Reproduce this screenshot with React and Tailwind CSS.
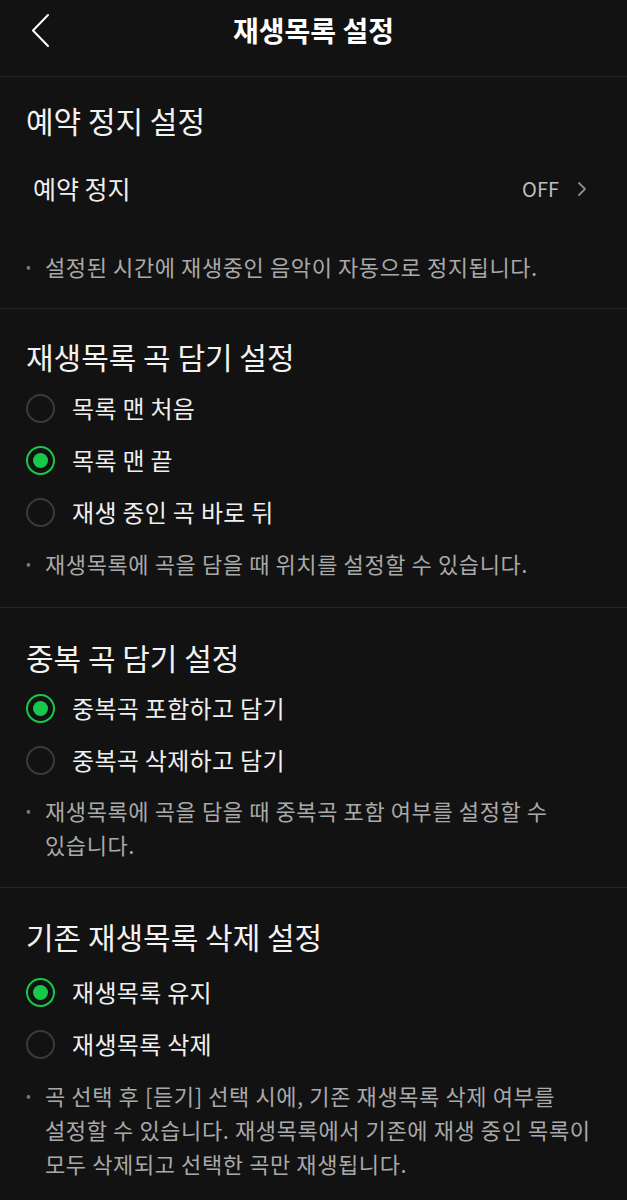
import React, { useState } from 'react';

const FONT = "font-['Noto_Sans_CJK_KR','Noto_Sans',sans-serif]";

function Radio({ checked }) {
  if (checked) {
    return (
      <span className="flex h-[29px] w-[29px] shrink-0 items-center justify-center rounded-full border-2 border-[#17c94a]">
        <span className="h-[15px] w-[15px] rounded-full bg-[#17c94a]" />
      </span>
    );
  }
  return <span className="h-[29px] w-[29px] shrink-0 rounded-full border-2 border-[#3a3a3a]" />;
}

function Note({ children }) {
  return (
    <div className="flex pl-[26px] pr-[30px] text-[22px] leading-[34px] tracking-[0.6px] text-[#a9a9a9]">
      <span className="w-[19px] shrink-0 text-[14px] text-[#7a7a7a]">•</span>
      <p className="break-keep">{children}</p>
    </div>
  );
}

function RadioGroup({ options, value, onChange }) {
  return (
    <div>
      {options.map((opt, i) => (
        <button
          key={opt}
          type="button"
          onClick={() => onChange(i)}
          className="flex h-[52px] w-full items-center gap-[17px] pl-[26px] text-left"
        >
          <Radio checked={value === i} />
          <span className="text-[24px] tracking-[0.3px] text-[#efefef]">{opt}</span>
        </button>
      ))}
    </div>
  );
}

export default function App() {
  const [addPos, setAddPos] = useState(1);
  const [dup, setDup] = useState(0);
  const [keep, setKeep] = useState(0);

  return (
    <div className={`${FONT} min-h-[1200px] w-full bg-[#121212] text-white`}>
      {/* Header */}
      <div className="relative flex h-[77px] items-center justify-center border-b border-[#262626]">
        <button type="button" className="absolute left-[30px] top-[13px]">
          <svg width="22" height="36" viewBox="0 0 22 36" fill="none">
            <path d="M18 2 L3 17.5 L18 33" stroke="#ffffff" strokeWidth="2" strokeLinecap="round" strokeLinejoin="round" />
          </svg>
        </button>
        <h1 className="-mt-[17px] text-[28px] font-bold tracking-[0px] text-white">재생목록 설정</h1>
      </div>

      {/* 예약 정지 설정 */}
      <section className="border-b border-[#262626] pb-[25px] pt-[23px]">
        <h2 className="px-[26px] text-[30px] leading-[40px] text-[#f2f2f2]">예약 정지 설정</h2>
        <div className="mt-[19px] flex h-[60px] items-center justify-between pl-[33px] pr-[40px]">
          <span className="text-[25px] text-[#efefef]">예약 정지</span>
          <span className="flex items-center gap-[18px] text-[20px] text-[#bdbdbd]">
            OFF
            <svg width="10" height="16" viewBox="0 0 10 16" fill="none">
              <path d="M2 2 L8 8 L2 14" stroke="#8a8a8a" strokeWidth="1.8" strokeLinecap="round" strokeLinejoin="round" />
            </svg>
          </span>
        </div>
        <div className="mt-[30px]">
          <Note>설정된 시간에 재생중인 음악이 자동으로 정지됩니다.</Note>
        </div>
      </section>

      {/* 재생목록 곡 담기 설정 */}
      <section className="border-b border-[#262626] pb-[27px] pt-[27px]">
        <h2 className="px-[26px] text-[30px] leading-[40px] text-[#f2f2f2]">재생목록 곡 담기 설정</h2>
        <div className="mt-[6px]">
          <RadioGroup
            options={['목록 맨 처음', '목록 맨 끝', '재생 중인 곡 바로 뒤']}
            value={addPos}
            onChange={setAddPos}
          />
        </div>
        <div className="mt-[8px]">
          <Note>재생목록에 곡을 담을 때 위치를 설정할 수 있습니다.</Note>
        </div>
      </section>

      {/* 중복 곡 담기 설정 */}
      <section className="border-b border-[#262626] pb-[26px] pt-[29px]">
        <h2 className="px-[26px] text-[30px] leading-[40px] text-[#f2f2f2]">중복 곡 담기 설정</h2>
        <div className="mt-[5px]">
          <RadioGroup options={['중복곡 포함하고 담기', '중복곡 삭제하고 담기']} value={dup} onChange={setDup} />
        </div>
        <div className="mt-[7px]">
          <Note>재생목록에 곡을 담을 때 중복곡 포함 여부를 설정할 수 있습니다.</Note>
        </div>
      </section>

      {/* 기존 재생목록 삭제 설정 */}
      <section className="pb-[20px] pt-[28px]">
        <h2 className="px-[26px] text-[30px] leading-[40px] text-[#f2f2f2]">기존 재생목록 삭제 설정</h2>
        <div className="mt-[10px]">
          <RadioGroup options={['재생목록 유지', '재생목록 삭제']} value={keep} onChange={setKeep} />
        </div>
        <div className="mt-[8px]">
          <Note>
            곡 선택 후 [듣기] 선택 시에, 기존 재생목록 삭제 여부를 설정할 수 있습니다. 재생목록에서 기존에 재생 중인 목록이 모두 삭제되고 선택한 곡만 재생됩니다.
          </Note>
        </div>
      </section>
    </div>
  );
}
